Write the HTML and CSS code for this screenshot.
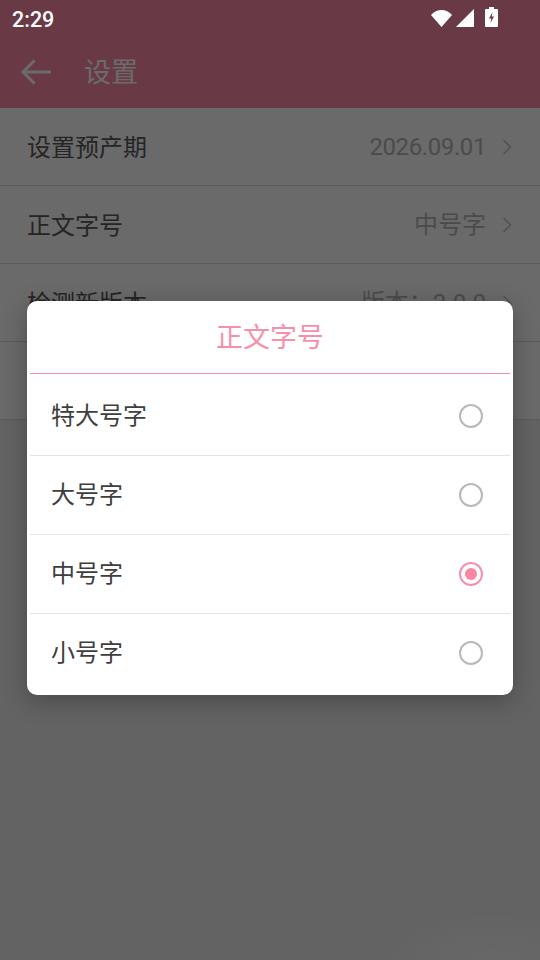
FILE: index.html
```html
<!DOCTYPE html>
<html lang="zh-CN">
<head>
  <meta charset="UTF-8">
  <meta name="viewport" content="width=device-width, initial-scale=1.0">
  <title>设置</title>
  <link rel="stylesheet" href="styles.css">
</head>
<body>
  <div class="page">
    <header class="app-bar">
      <div class="status-space"></div>
      <div class="toolbar">
        <svg class="back-icon" viewBox="0 0 32 28" width="32" height="28">
          <path d="M31 14H3M14.500 2.500 3 14l11.500 11.500" fill="none" stroke="#fff" stroke-width="3"/>
        </svg>
        <h1 class="toolbar-title">设置</h1>
      </div>
    </header>

    <ul class="settings">
      <li class="settings-row">
        <span class="row-label">设置预产期</span>
        <span class="row-value date">2026.09.01</span>
        <svg class="chevron" viewBox="0 0 10 16" width="10" height="16"><path d="M1.500 1 8.500 8l-7 7" fill="none" stroke="#bdbdbd" stroke-width="1.400"/></svg>
      </li>
      <li class="settings-row">
        <span class="row-label">正文字号</span>
        <span class="row-value">中号字</span>
        <svg class="chevron" viewBox="0 0 10 16" width="10" height="16"><path d="M1.500 1 8.500 8l-7 7" fill="none" stroke="#bdbdbd" stroke-width="1.400"/></svg>
      </li>
      <li class="settings-row">
        <span class="row-label">检测新版本</span>
        <span class="row-value">版本：2.0.0</span>
        <svg class="chevron" viewBox="0 0 10 16" width="10" height="16"><path d="M1.500 1 8.500 8l-7 7" fill="none" stroke="#bdbdbd" stroke-width="1.400"/></svg>
      </li>
      <li class="settings-row"></li>
    </ul>
  </div>

  <div class="toast-glow"></div>

  <div class="overlay">
    <div class="dialog">
      <div class="dialog-title">正文字号</div>
      <ul class="options">
        <li class="option"><span>特大号字</span><i class="radio"></i></li>
        <li class="option"><span>大号字</span><i class="radio"></i></li>
        <li class="option"><span>中号字</span><i class="radio checked"></i></li>
        <li class="option"><span>小号字</span><i class="radio"></i></li>
      </ul>
    </div>
  </div>

  <div class="status-bar">
    <span class="clock">2:29</span>
    <div class="status-icons">
      <svg class="wifi" viewBox="0 0 21 18" width="21" height="18"><path d="M0 6C3 2.700 6.500 1 10.500 1S18 2.700 21 6L10.500 18z" fill="#fff"/></svg>
      <svg class="signal" viewBox="0 0 18 18" width="18" height="18"><path d="M18 0V18H0z" fill="#fff"/></svg>
      <svg class="battery" viewBox="0 0 13 20" width="13" height="20"><path fill-rule="evenodd" d="M4 0h5v2h3a1 1 0 0 1 1 1v16a1 1 0 0 1-1 1H1a1 1 0 0 1-1-1V3a1 1 0 0 1 1-1h3zM7.500 5 4 11.500h2.300L5.500 16 9 9.500H6.700z" fill="#fff"/></svg>
    </div>
  </div>
</body>
</html>
```

FILE: styles.css
```css
* {
  box-sizing: border-box;
  margin: 0;
  padding: 0;
}

html, body {
  height: 100%;
}

body {
  background: #ececec;
  color: #585858;
  font-family: Roboto, "Noto Sans CJK SC", sans-serif;
  overflow: hidden;
  position: relative;
}

ul {
  list-style: none;
}

.app-bar {
  background: #fb88a6;
}

.status-space {
  height: 36px;
}

.toolbar {
  height: 72px;
  display: flex;
  align-items: center;
  padding-left: 20px;
  gap: 32px;
}

.back-icon {
  flex: none;
}

.toolbar-title {
  color: #fff;
  font-size: 27px;
  font-weight: 400;
  padding-bottom: 4px;
}

.settings {
  background: #fdfdfd;
}

.settings-row {
  height: 78px;
  display: flex;
  align-items: center;
  padding: 0 28px;
  border-bottom: 1px solid #d8d8d8;
  font-size: 24px;
}

.row-label {
  flex: 1;
  margin-left: -1px;
  padding-bottom: 3px;
}

.row-value {
  color: #b4b4b4;
  padding-bottom: 4px;
  margin-right: -1px;
}

.row-value.date {
  letter-spacing: -0.4px;
  padding: 1px 0 0;
}

.chevron {
  margin-left: 17px;
}

.toast-glow {
  position: absolute;
  right: 0;
  bottom: 0;
  width: 160px;
  height: 50px;
  background: radial-gradient(ellipse at 70% 100%, #f7f7f7, #ececec 72%);
}

.overlay {
  position: absolute;
  inset: 0;
  padding-top: 36px;
  background: rgba(0, 0, 0, 0.58);
  display: flex;
  align-items: center;
  justify-content: center;
}

.dialog {
  width: 486px;
  padding: 0 3px 3px;
  background: #fff;
  border-radius: 10px;
  box-shadow: 0 6px 24px rgba(0, 0, 0, 0.28);
}

.dialog-title {
  height: 73px;
  padding-bottom: 4px;
  border-bottom: 1px solid #f48fb0;
  color: #f78fa9;
  font-size: 27px;
  display: flex;
  align-items: center;
  justify-content: center;
}

.options {
  padding-top: 3px;
}

.option {
  height: 79px;
  display: flex;
  align-items: center;
  justify-content: space-between;
  padding: 0 27px 0 21px;
  border-bottom: 1px solid #e4e4e4;
  color: #3e3e3e;
  font-size: 24px;
}

.option span {
  padding-bottom: 6px;
}

.option:last-child {
  height: 78px;
  border-bottom: none;
}

.radio {
  width: 24px;
  height: 24px;
  border: 2.500px solid #b8b8b8;
  border-radius: 50%;
  display: flex;
  align-items: center;
  justify-content: center;
}

.radio.checked {
  border-color: #f78fa9;
}

.radio.checked::after {
  content: "";
  width: 12px;
  height: 12px;
  border-radius: 50%;
  background: #fb86a4;
}

.status-bar {
  position: absolute;
  top: 0;
  left: 0;
  right: 0;
  height: 36px;
  display: flex;
  align-items: center;
  justify-content: space-between;
  padding: 0 42px 0 12px;
  color: #fff;
}

.clock {
  font-size: 21.500px;
  font-weight: 500;
  padding-top: 2px;
}

.status-icons {
  display: flex;
  align-items: center;
  gap: 4px;
}

.wifi {
  margin-bottom: 1px;
}

.battery {
  margin-left: 7px;
  margin-bottom: 2px;
}
```
